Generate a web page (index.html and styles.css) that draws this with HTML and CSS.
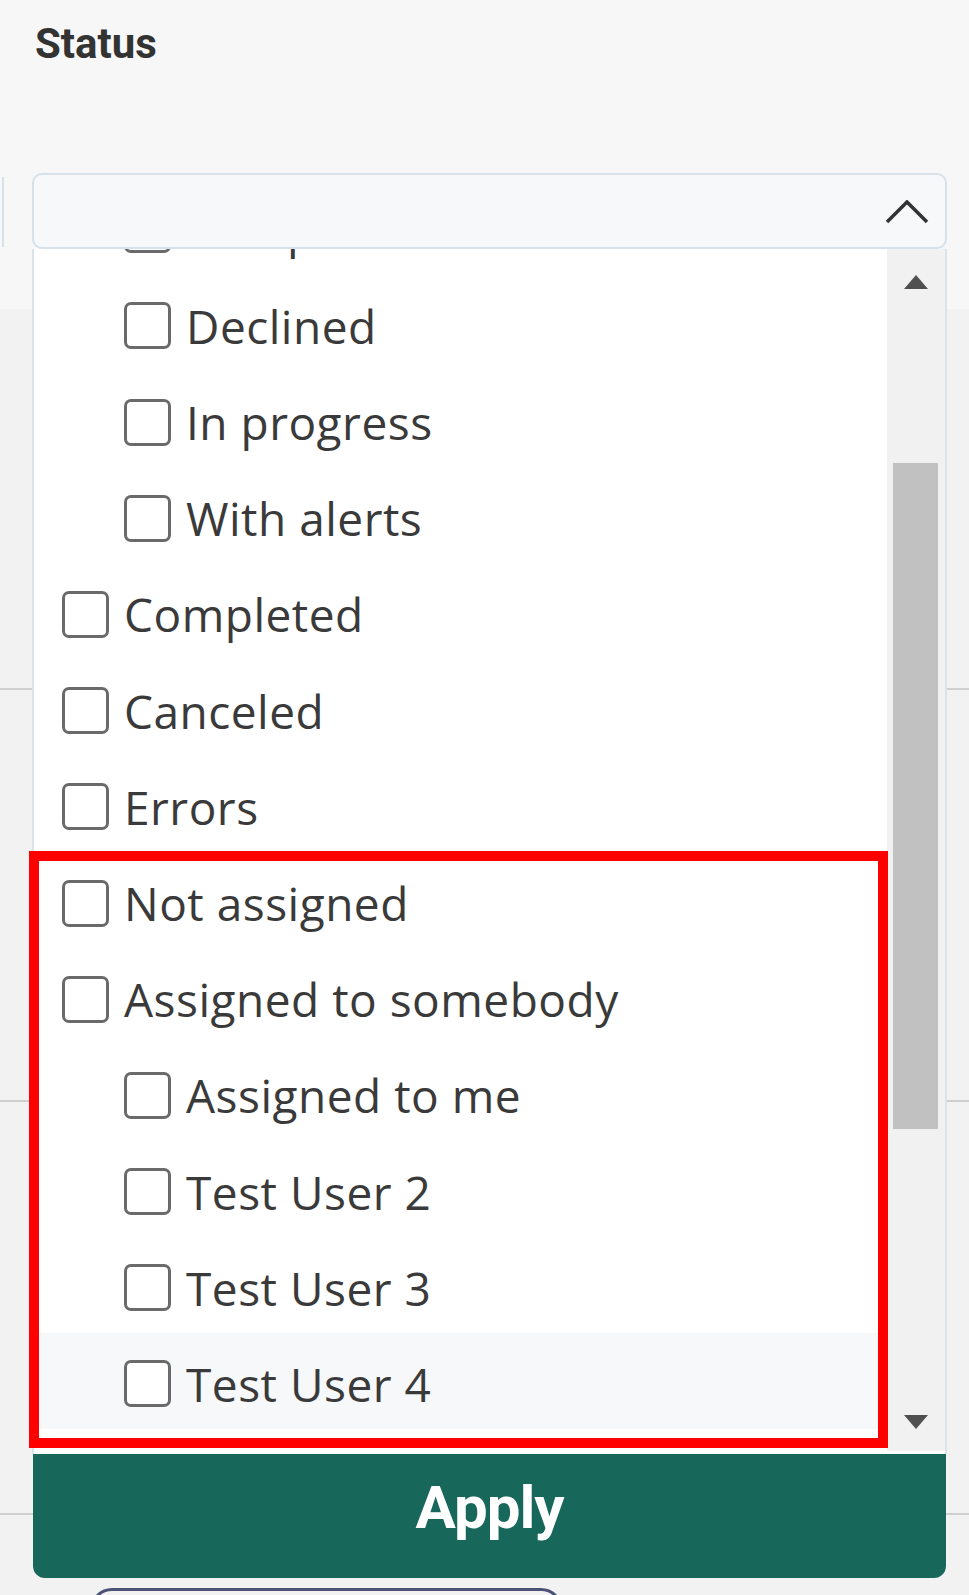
FILE: index.html
```html
<!DOCTYPE html>
<html lang="en">
<head>
<meta charset="utf-8">
<title>Status filter</title>
<link rel="stylesheet" href="styles.css">
</head>
<body>
<div class="page">
  <header class="filters">
    <div class="prev-field"><div class="prev-input"></div></div>
    <div class="status-field">
      <div class="field-label">Status</div>
      <div class="select-box">
        <svg class="chevron" width="44" height="24" viewBox="0 0 44 24"><path d="M2 22 L22 2 L42 22" fill="none" stroke="#333" stroke-width="3.5"/></svg>
      </div>
      <div class="dropdown">
        <div class="list-wrap">
          <div class="rows">
            <div class="rows-inner">
              <div class="opt nested"><span class="cb"></span><span class="txt">Accepted</span></div>
              <div class="opt nested"><span class="cb"></span><span class="txt">Declined</span></div>
              <div class="opt nested"><span class="cb"></span><span class="txt">In progress</span></div>
              <div class="opt nested"><span class="cb"></span><span class="txt">With alerts</span></div>
              <div class="opt"><span class="cb"></span><span class="txt">Completed</span></div>
              <div class="opt"><span class="cb"></span><span class="txt">Canceled</span></div>
              <div class="opt"><span class="cb"></span><span class="txt">Errors</span></div>
              <div class="opt"><span class="cb"></span><span class="txt">Not assigned</span></div>
              <div class="opt"><span class="cb"></span><span class="txt">Assigned to somebody</span></div>
              <div class="opt nested"><span class="cb"></span><span class="txt">Assigned to me</span></div>
              <div class="opt nested"><span class="cb"></span><span class="txt">Test User 2</span></div>
              <div class="opt nested"><span class="cb"></span><span class="txt">Test User 3</span></div>
              <div class="opt nested hover"><span class="cb"></span><span class="txt">Test User 4</span></div>
            </div>
          </div>
          <div class="scrollbar">
            <div class="sb-up"><span class="tri-up"></span></div>
            <div class="sb-track"><div class="sb-thumb"></div></div>
            <div class="sb-down"><span class="tri-down"></span></div>
          </div>
        </div>
        <button class="apply">Apply</button>
        <div class="highlight"></div>
      </div>
    </div>
  </header>
  <section class="trow r1"></section>
  <section class="trow r2"></section>
  <section class="trow r3"></section>
  <section class="trow r4"><div class="outline-btn"></div></section>
</div>
</body>
</html>
```
FILE: styles.css
```css
html, body {
  margin: 0;
  padding: 0;
  height: 100%;
  overflow: hidden;
}
body {
  background: #f2f2f2;
  font-family: "Open Sans", "Noto Sans", sans-serif;
}
.page {
  width: 969px;
  height: 1595px;
  overflow: hidden;
}
.filters {
  height: 309px;
  background: #f7f7f7;
  display: flex;
  position: relative;
  z-index: 2;
}
.prev-field {
  width: 4px;
}
.prev-input {
  margin-top: 177px;
  height: 70px;
  width: 2px;
  border-right: 2px solid #d6e1ea;
  background: #f6f8fa;
}
.status-field {
  margin-left: 28px;
  width: 915px;
  position: relative;
}
.field-label {
  margin-top: 23px;
  padding-left: 3px;
  font-family: Roboto, "Liberation Sans", sans-serif;
  font-weight: 700;
  font-size: 42px;
  line-height: 42px;
  color: #333333;
}
.select-box {
  margin-top: 108px;
  height: 76px;
  box-sizing: border-box;
  border: 2px solid #d6e1ea;
  border-radius: 10px;
  background: #f6f8fa;
  display: flex;
  align-items: center;
  justify-content: flex-end;
  padding-right: 16px;
  padding-top: 2px;
}
.chevron {
  display: block;
}
.dropdown {
  position: absolute;
  left: 0;
  top: 249px;
  width: 915px;
}
.list-wrap {
  display: flex;
  height: 1205px;
  background: #ffffff;
  border-left: 2px solid #d9e3ec;
  border-right: 2px solid #d9e3ec;
}
.rows {
  flex: 1;
  overflow: hidden;
  height: 1202px;
}
.rows-inner {
  margin-top: -70.4px;
}
.opt {
  height: 96.2px;
  box-sizing: border-box;
  padding-top: 6px;
  padding-left: 28px;
  display: flex;
  align-items: center;
  gap: 15px;
}
.opt.nested {
  padding-left: 90px;
}
.opt.hover {
  background: #f6f8fa;
}
.cb {
  width: 47px;
  height: 47px;
  box-sizing: border-box;
  border: 3px solid #6a6a6a;
  border-radius: 7px;
  background: #ffffff;
  flex: none;
}
.txt {
  font-size: 46px;
  line-height: 46px;
  letter-spacing: 0.5px;
  color: #3a3a3a;
  white-space: nowrap;
}
.scrollbar {
  width: 58px;
  height: 1202px;
  background: #f1f1f1;
  display: flex;
  flex-direction: column;
}
.sb-up {
  height: 66px;
  display: flex;
  align-items: center;
  justify-content: center;
}
.sb-down {
  height: 58px;
  display: flex;
  align-items: center;
  justify-content: center;
}
.tri-up {
  width: 0;
  height: 0;
  border-left: 12.5px solid transparent;
  border-right: 12.5px solid transparent;
  border-bottom: 14px solid #505050;
}
.tri-down {
  width: 0;
  height: 0;
  border-left: 12.5px solid transparent;
  border-right: 12.5px solid transparent;
  border-top: 14px solid #505050;
}
.sb-track {
  flex: 1;
  padding-left: 6px;
}
.sb-thumb {
  margin-top: 148px;
  width: 45px;
  height: 666px;
  background: #c1c1c1;
}
.apply {
  display: block;
  width: 913px;
  height: 124px;
  margin: 0 1px;
  box-sizing: border-box;
  border: none;
  border-radius: 0 0 12px 12px;
  background: #17675a;
  color: #ffffff;
  font-family: Roboto, "Liberation Sans", sans-serif;
  font-weight: 700;
  font-size: 60px;
  line-height: 60px;
  letter-spacing: -1px;
  padding: 23.5px 0 40.5px;
  text-align: center;
}
.highlight {
  position: absolute;
  left: -3px;
  top: 602px;
  width: 859px;
  height: 597px;
  box-sizing: border-box;
  border: 10px solid #ff0000;
  pointer-events: none;
}
.trow {
  border-bottom: 2px solid #cfcfcf;
  background: #f2f2f2;
}
.r1 { height: 379px; }
.r2 { height: 410px; }
.r3 { height: 411px; }
.r4 {
  height: 80px;
  box-sizing: border-box;
  border-bottom: none;
  padding-top: 73px;
  padding-left: 90px;
  overflow: hidden;
}
.outline-btn {
  width: 473px;
  height: 60px;
  box-sizing: border-box;
  border: 3px solid #4c5178;
  border-radius: 22px;
}
```
